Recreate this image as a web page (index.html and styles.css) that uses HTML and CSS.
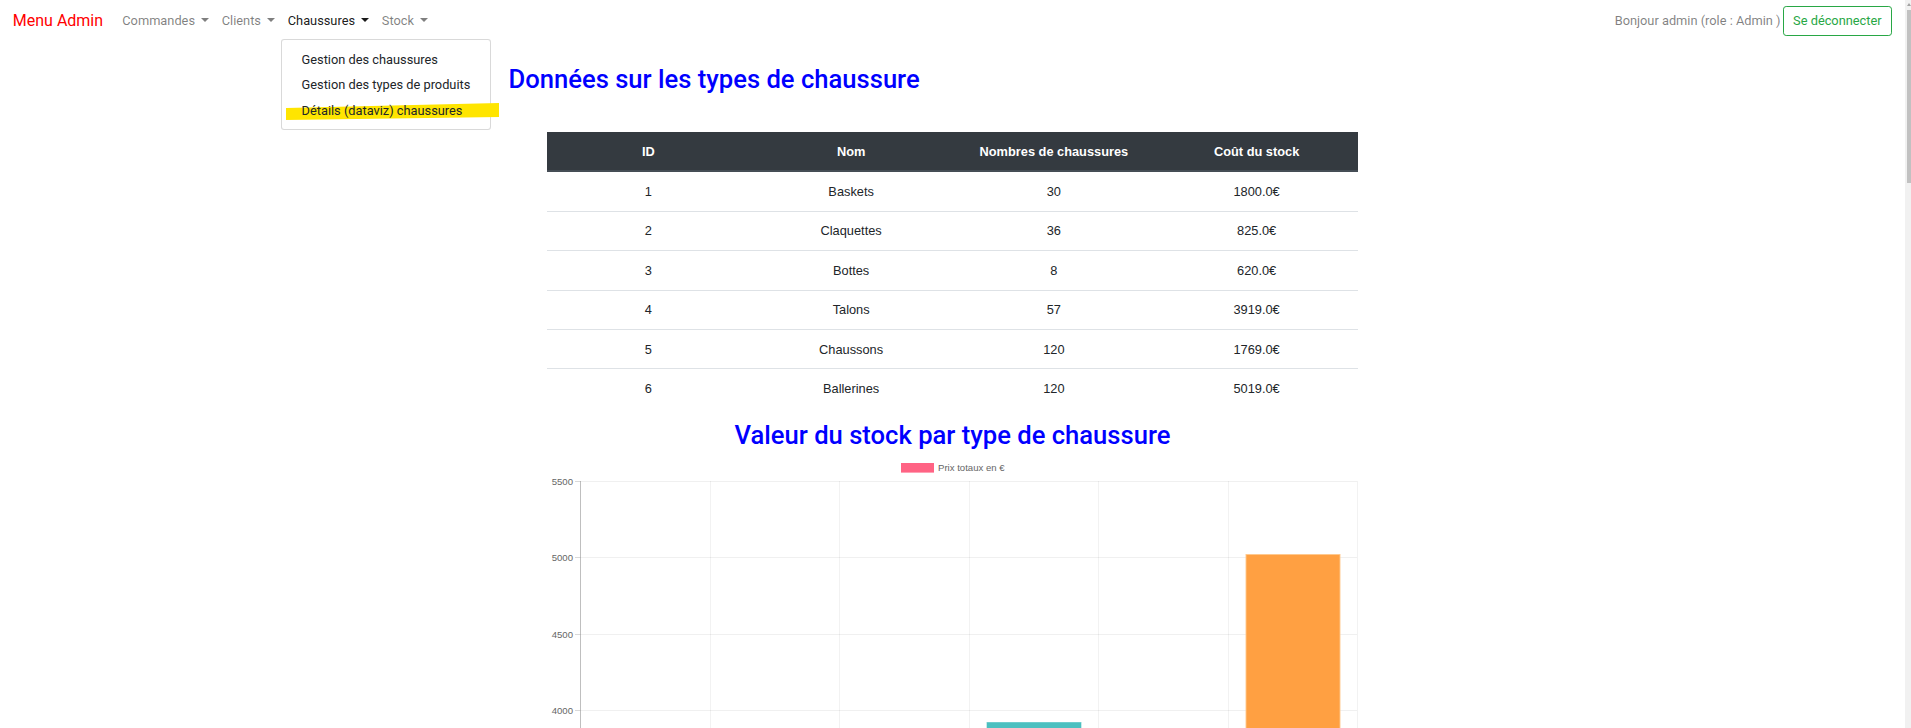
FILE: index.html
```html
<!DOCTYPE html>
<html lang="fr">
<head>
<meta charset="utf-8">
<title>Menu Admin</title>
<link rel="stylesheet" href="styles.css">
</head>
<body>
<div class="page">
  <nav class="navbar">
    <a class="brand" href="#">Menu Admin</a>
    <ul class="nav">
      <li class="nav-item"><a class="nav-link toggle" href="#">Commandes</a></li>
      <li class="nav-item"><a class="nav-link toggle" href="#">Clients</a></li>
      <li class="nav-item dropdown">
        <a class="nav-link toggle active" href="#">Chaussures</a>
        <div class="dropdown-menu">
          <a class="dropdown-item" href="#"><span class="item-text">Gestion des chaussures</span></a>
          <a class="dropdown-item" href="#"><span class="item-text">Gestion des types de produits</span></a>
          <a class="dropdown-item" href="#"><span class="item-text">Détails (dataviz) chaussures</span></a>
          <svg class="marker" width="213" height="18" viewBox="0 0 213 18"><polygon points="0,5 213,0 213,14 0,17" fill="#ffe500"/></svg>
        </div>
      </li>
      <li class="nav-item"><a class="nav-link toggle" href="#">Stock</a></li>
    </ul>
    <div class="user">
      <span class="navbar-text">Bonjour admin (role : Admin )</span>
      <button class="btn-outline" type="button">Se déconnecter</button>
    </div>
  </nav>

  <main class="container">
    <h2 class="title">Données sur les types de chaussure</h2>
    <table class="data-table">
      <thead>
        <tr><th>ID</th><th>Nom</th><th>Nombres de chaussures</th><th>Coût du stock</th></tr>
      </thead>
      <tbody>
        <tr><td>1</td><td>Baskets</td><td>30</td><td>1800.0€</td></tr>
        <tr><td>2</td><td>Claquettes</td><td>36</td><td>825.0€</td></tr>
        <tr><td>3</td><td>Bottes</td><td>8</td><td>620.0€</td></tr>
        <tr><td>4</td><td>Talons</td><td>57</td><td>3919.0€</td></tr>
        <tr><td>5</td><td>Chaussons</td><td>120</td><td>1769.0€</td></tr>
        <tr><td>6</td><td>Ballerines</td><td>120</td><td>5019.0€</td></tr>
      </tbody>
    </table>

    <h2 class="title chart-title">Valeur du stock par type de chaussure</h2>
    <div class="chart">
      <svg width="811" height="880" viewBox="0 0 811 880" class="chart-svg">
        <rect x="354" y="10" width="33" height="9.6" fill="rgb(255,99,132)"/>
        <text x="391" y="18" class="legend">Prix totaux en €</text>
        <g stroke="rgba(0,0,0,0.06)" stroke-width="1">
          <line x1="33" y1="28.5" x2="810" y2="28.5"/>
          <line x1="33" y1="104.5" x2="810" y2="104.5"/>
          <line x1="33" y1="181.5" x2="810" y2="181.5"/>
          <line x1="33" y1="257.5" x2="810" y2="257.5"/>
          <line x1="33" y1="334.5" x2="810" y2="334.5"/>
          <line x1="33" y1="410.5" x2="810" y2="410.5"/>
          <line x1="33" y1="487.5" x2="810" y2="487.5"/>
          <line x1="33" y1="563.5" x2="810" y2="563.5"/>
          <line x1="33" y1="640.5" x2="810" y2="640.5"/>
          <line x1="33" y1="716.5" x2="810" y2="716.5"/>
          <line x1="33" y1="793.5" x2="810" y2="793.5"/>
        </g>
        <g stroke="rgba(0,0,0,0.05)" stroke-width="1">
          <line x1="163.5" y1="28" x2="163.5" y2="878"/>
          <line x1="292.5" y1="28" x2="292.5" y2="878"/>
          <line x1="422.5" y1="28" x2="422.5" y2="878"/>
          <line x1="551.5" y1="28" x2="551.5" y2="878"/>
          <line x1="681.5" y1="28" x2="681.5" y2="878"/>
          <line x1="810.5" y1="28" x2="810.5" y2="878"/>
        </g>
        <g stroke="rgba(0,0,0,0.15)" stroke-width="1">
          <line x1="28" y1="28.5" x2="33" y2="28.5"/>
          <line x1="28" y1="104.5" x2="33" y2="104.5"/>
          <line x1="28" y1="181.5" x2="33" y2="181.5"/>
          <line x1="28" y1="257.5" x2="33" y2="257.5"/>
          <line x1="28" y1="334.5" x2="33" y2="334.5"/>
          <line x1="28" y1="410.5" x2="33" y2="410.5"/>
          <line x1="28" y1="487.5" x2="33" y2="487.5"/>
          <line x1="28" y1="563.5" x2="33" y2="563.5"/>
          <line x1="28" y1="640.5" x2="33" y2="640.5"/>
          <line x1="28" y1="716.5" x2="33" y2="716.5"/>
          <line x1="28" y1="793.5" x2="33" y2="793.5"/>
        </g>
        <g class="tick">
          <text x="26" y="31.5">5500</text>
          <text x="26" y="108">5000</text>
          <text x="26" y="184.5">4500</text>
          <text x="26" y="261">4000</text>
        </g>
        <rect x="51.5" y="594" width="94" height="275.5" fill="rgb(255,99,132)"/>
        <rect x="181" y="743.5" width="94" height="126" fill="rgb(54,162,235)"/>
        <rect x="310.5" y="774.5" width="94" height="95" fill="rgb(255,205,86)"/>
        <rect x="440" y="269.5" width="94" height="600" fill="rgb(75,192,192)" stroke="rgba(75,192,192,0.6)"/>
        <rect x="569.5" y="599" width="94" height="270.5" fill="rgb(153,102,255)"/>
        <rect x="699" y="101.5" width="94" height="768" fill="rgb(255,160,66)" stroke="rgba(255,200,140,0.9)"/>
        <line x1="33.5" y1="28" x2="33.5" y2="870" stroke="rgba(0,0,0,0.25)"/>
        <line x1="33" y1="869.5" x2="810" y2="869.5" stroke="rgba(0,0,0,0.25)"/>
      </svg>
    </div>
  </main>
</div>
<div class="scrollbar" aria-hidden="true">
  <div class="scroll-arrow"></div>
  <div class="scroll-thumb"></div>
</div>
</body>
</html>
```

FILE: styles.css
```css
html {
  font-size: 12.8px;
}

body {
  margin: 0;
  display: flex;
  align-items: stretch;
  font-family: Roboto, "Noto Sans", "Liberation Sans", sans-serif;
  font-size: 12.8px;
  line-height: 1.5;
  color: #212529;
  background: #fff;
}

a {
  text-decoration: none;
}

.page {
  flex: 1 1 auto;
  min-width: 0;
}

/* fake (cropped) scrollbar */
.scrollbar {
  flex: 0 0 6px;
  background: #f1f1f1;
}

.scroll-arrow {
  width: 0;
  height: 0;
  margin: 3px 0 0 2px;
  border-bottom: 3px solid #a3a3a3;
  border-left: 2px solid transparent;
  border-right: 2px solid transparent;
}

.scroll-thumb {
  margin: 4px 0 0 2px;
  height: 173px;
  background: #c1c1c1;
}

/* ---------- navbar ---------- */
.navbar {
  display: flex;
  align-items: center;
  padding: 5px 12.8px 6.4px;
}

.brand {
  color: #ff0000;
  font-size: 16px;
  line-height: 24px;
  padding: 4px 0;
  margin-right: 12.8px;
}

.nav {
  display: flex;
  list-style: none;
  margin: 0;
  padding: 0;
}

.nav-item {
  position: relative;
}

.nav-link {
  display: block;
  padding: 6.4px;
  color: rgba(0, 0, 0, 0.5);
}

.nav-link.active {
  color: rgba(0, 0, 0, 0.9);
}

.toggle::after {
  content: "";
  display: inline-block;
  margin-left: 6px;
  vertical-align: 3px;
  border-top: 4px solid;
  border-right: 4px solid transparent;
  border-left: 4px solid transparent;
}

.dropdown-menu {
  position: absolute;
  top: 100%;
  left: 0;
  z-index: 10;
  margin-top: 2px;
  min-width: 160px;
  padding: 6.4px 0;
  background: #fff;
  border: 1px solid rgba(0, 0, 0, 0.15);
  border-radius: 3.2px;
}

.dropdown-item {
  display: block;
  padding: 3.2px 19.2px;
  color: #212529;
  white-space: nowrap;
}

.item-text {
  position: relative;
  z-index: 2;
}

.marker {
  position: absolute;
  left: 4px;
  top: 63px;
  z-index: 1;
  display: block;
}

.user {
  margin-left: auto;
  display: flex;
  align-items: center;
}

.navbar-text {
  color: rgba(0, 0, 0, 0.5);
  padding: 6.4px 0;
}

.btn-outline {
  font-family: inherit;
  font-size: 12.8px;
  line-height: 19.2px;
  padding: 4.8px 9.6px;
  margin-left: 2px;
  color: #28a745;
  background: transparent;
  border: 1px solid #28a745;
  border-radius: 3.2px;
}

/* ---------- content ---------- */
.container {
  max-width: 888px;
  margin: 0 auto;
  padding: 0 12px 40px;
}

.title {
  margin: 21px 0 37px;
  font-size: 25.6px;
  font-weight: 500;
  line-height: 1.2;
  color: #0000ff;
}

.chart-title {
  text-align: center;
  margin: 12px 0 2px;
}

.data-table {
  width: 811px;
  margin: 0 auto;
  border-collapse: collapse;
  table-layout: fixed;
  font-family: "Liberation Sans", Arial, sans-serif;
  font-size: 12.8px;
  line-height: 19.2px;
  color: #212529;
}

.data-table th {
  background: #343a40;
  color: #fff;
  font-weight: bold;
  padding: 9.6px;
  text-align: center;
  border-bottom: 2px solid #454d55;
}

.data-table td {
  padding: 9.6px;
  text-align: center;
  border-top: 1px solid #dee2e6;
}

.chart {
  width: 811px;
  margin: 0 auto;
}

.chart-svg {
  display: block;
  font-family: "Liberation Sans", Arial, sans-serif;
}

.legend {
  font-size: 9.6px;
  fill: #666;
}

.tick text {
  font-size: 9.6px;
  fill: #666;
  text-anchor: end;
}
```
